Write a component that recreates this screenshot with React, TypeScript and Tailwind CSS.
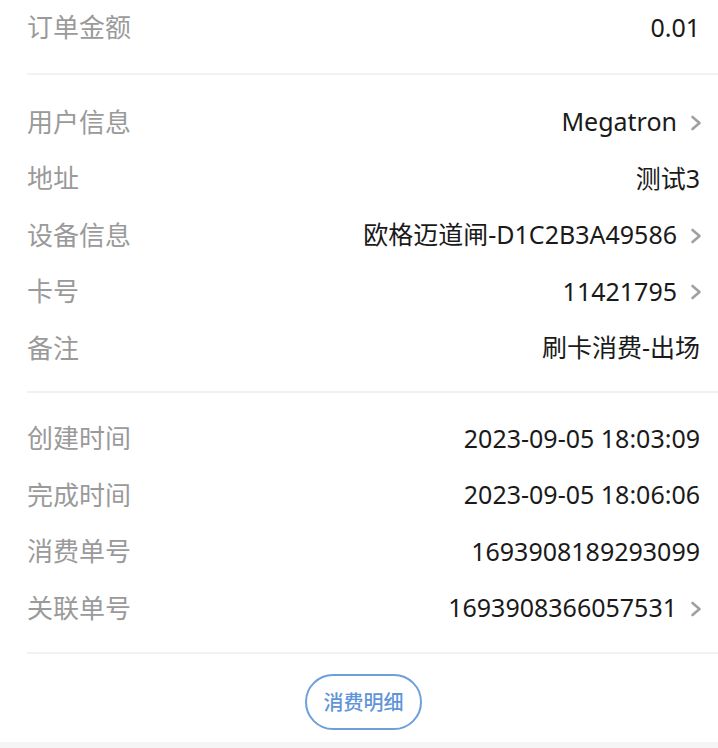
import React from 'react';

interface Row {
  label: string;
  value: string;
  link?: boolean;
}

const sections: Row[][] = [
  [{ label: '订单金额', value: '0.01' }],
  [
    { label: '用户信息', value: 'Megatron', link: true },
    { label: '地址', value: '测试3' },
    { label: '设备信息', value: '欧格迈道闸-D1C2B3A49586', link: true },
    { label: '卡号', value: '11421795', link: true },
    { label: '备注', value: '刷卡消费-出场' },
  ],
  [
    { label: '创建时间', value: '2023-09-05 18:03:09' },
    { label: '完成时间', value: '2023-09-05 18:06:06' },
    { label: '消费单号', value: '1693908189293099' },
    { label: '关联单号', value: '1693908366057531', link: true },
  ],
];

function Chevron() {
  return (
    <svg className="ml-[13px] w-[13px] h-[16px]" viewBox="0 0 13 16" fill="none">
      <path d="M2.5 2l7 6-7 6" stroke="#a0a0a0" strokeWidth={2.6} strokeLinecap="round" strokeLinejoin="round" />
    </svg>
  );
}

function InfoRow({ row }: { row: Row }) {
  return (
    <div className="flex items-center justify-between h-[56.5px] pr-[15px]">
      <span className="text-[#9a9a9a] text-[26px] pb-[4px]">{row.label}</span>
      <div className="flex items-center">
        <span
          className={`text-[#1a1a1a] pb-[2px] ${row.link ? '' : 'pr-[3px]'}`}
          style={{ fontFamily: '"Noto Sans", "Noto Sans CJK SC", sans-serif' }}
        >
          {row.value}
        </span>
        {row.link && <Chevron />}
      </div>
    </div>
  );
}

export default function App() {
  return (
    <div
      className="w-[718px] h-[748px] bg-[#f5f5f5] text-[25px] leading-none"
      style={{ fontFamily: '"Noto Sans CJK SC", "Noto Sans", sans-serif' }}
    >
      <div className="bg-white pl-[27px] h-[742px]">
        {/* amount */}
        <div className="pb-[16px]">
          <InfoRow row={sections[0][0]} />
        </div>
        <div className="h-[2px] bg-[#f2f2f2]" />

        {/* user / device */}
        <div className="pt-[20px] pb-[14px]">
          {sections[1].map(r => (
            <InfoRow key={r.label} row={r} />
          ))}
        </div>
        <div className="h-[2px] bg-[#f2f2f2]" />

        {/* times / order numbers */}
        <div className="pt-[18px] pb-[15px]">
          {sections[2].map(r => (
            <InfoRow key={r.label} row={r} />
          ))}
        </div>
        <div className="h-[2px] bg-[#f2f2f2]" />

        <div className="flex justify-center pt-[20px] pr-[18px]">
          <button className="w-[117px] h-[56px] rounded-full border-2 border-[#6d9fdb] text-[#5f95d8] text-[20px] font-medium">
            消费明细
          </button>
        </div>
      </div>
    </div>
  );
}
